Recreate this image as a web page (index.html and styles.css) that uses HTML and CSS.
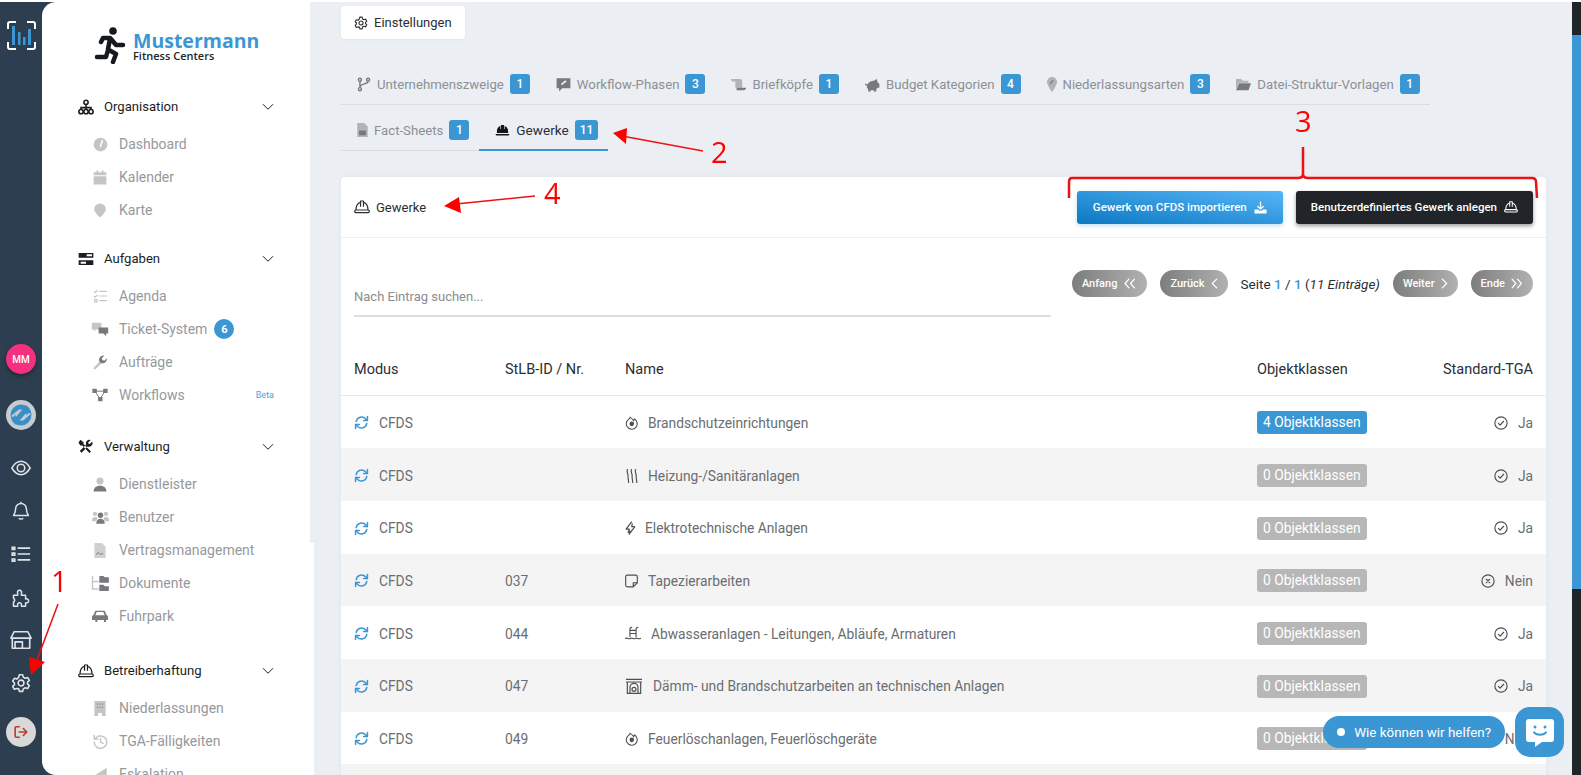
FILE: index.html
```html
<!DOCTYPE html>
<html lang="de">
<head>
<meta charset="utf-8">
<title>Einstellungen – Gewerke</title>
<link rel="stylesheet" href="styles.css">
</head>
<body>
<svg class="sprite" xmlns="http://www.w3.org/2000/svg">
  <symbol id="i-refresh" viewBox="0 0 24 24"><g fill="none" stroke="currentColor" stroke-width="2.4" stroke-linecap="round" stroke-linejoin="round"><path d="M3.5 10.5A8.8 8.8 0 0 1 18.6 6l2.4 2.6"/><path d="M21.5 2.5v6.3h-6.2"/><path d="M20.5 13.5A8.8 8.8 0 0 1 5.4 18L3 15.4"/><path d="M2.5 21.5v-6.3h6.2"/></g></symbol>
  <symbol id="i-check" viewBox="0 0 24 24"><g fill="none" stroke="currentColor" stroke-width="2" stroke-linecap="round" stroke-linejoin="round"><circle cx="12" cy="12" r="10.5"/><path d="M7.5 12.5l3 3 6-6.5"/></g></symbol>
  <symbol id="i-times" viewBox="0 0 24 24"><g fill="none" stroke="currentColor" stroke-width="2" stroke-linecap="round"><circle cx="12" cy="12" r="10.5"/><path d="M9 9l6 6M15 9l-6 6"/></g></symbol>
  <symbol id="i-fire" viewBox="0 0 24 24"><path fill="none" stroke="currentColor" stroke-width="2" d="M9.5 2.5C9 5 5.5 6 3.8 9.5a10 10 0 1 0 18 1.5c-.8-2.5-2.5-4.5-4.3-5.5l-1.5 3C14.5 6.5 12 4 9.5 2.5z"/><circle cx="12.5" cy="14.5" r="4.2" fill="currentColor"/></symbol>
  <symbol id="i-gear" viewBox="0 0 24 24"><g fill="none" stroke="currentColor" stroke-width="1.9" stroke-linejoin="round"><path d="M10 2h4l.7 3 2.3 1.300 3-.9 2 3.500-2.200 2.100v2l2.200 2.100-2 3.500-3-.9-2.300 1.300-.7 3h-4l-.7-3L7 18.700l-3 .9-2-3.500 2.200-2.100v-2L2 9.900l2-3.500 3 .9L9.300 5z"/><circle cx="12" cy="12" r="3.5"/></g></symbol>
  <symbol id="i-helmet-o" viewBox="0 0 24 24"><g fill="none" stroke="currentColor" stroke-width="1.8" stroke-linejoin="round"><path d="M3 16.5C3 10 6 6 9.8 5M21 16.5C21 10 18 6 14.2 5"/><path d="M9.8 11.500V3h4.400v8.500"/><rect x="1" y="16.500" width="22" height="4" rx="2"/></g></symbol>
  <symbol id="i-helmet" viewBox="0 0 24 24"><path fill="currentColor" d="M9.500 3h5v6.500h1V4.800A9 9 0 0 1 21 13v3H3v-3a9 9 0 0 1 5.500-8.200v4.700h1zM1 17.500h22c0 1.800-1 2.500-2.500 2.500h-17C2 20 1 19.300 1 17.500z"/></symbol>
  <symbol id="i-chev" viewBox="0 0 24 24"><path fill="none" stroke="currentColor" stroke-width="2" stroke-linecap="round" stroke-linejoin="round" d="M2.500 7L12 16.500 21.500 7"/></symbol>
</svg>

<div class="app">
  <nav class="rail">
    <svg class="rail-logo" width="29" height="29" viewBox="0 0 29 29">
      <path class="rail-logo-frame" d="M1 8V3a2 2 0 0 1 2-2h6M20 1h6a2 2 0 0 1 2 2v5M28 21v5a2 2 0 0 1-2 2h-6M9 28H3a2 2 0 0 1-2-2v-5"/>
      <path class="rail-logo-bars" d="M5 5h3v19H5zM11 11h2.500v13H11zM16 16h2.500v8H16zM21 8h3v16h-3z"/>
    </svg>
    <div class="rail-bottom">
      <div class="avatar">MM</div>
      <div class="round round-sync">
        <svg width="24" height="24" viewBox="0 0 24 24"><circle cx="12" cy="12" r="8" fill="none" stroke="#3a8fc7" stroke-width="5"/><path d="M5 20L19 4" stroke="#3a8fc7" stroke-width="5"/><path d="M3 13.500L11 7M21 10.500L13 17" stroke="#c7ccd2" stroke-width="2"/></svg>
      </div>
      <div class="rail-icons">
        <span class="rail-icon"><svg width="20" height="20" viewBox="0 0 24 24" fill="none" stroke="currentColor" stroke-width="1.800"><path d="M1 12c3-5 7-8 11-8s8 3 11 8c-3 5-7 8-11 8s-8-3-11-8z"/><circle cx="12" cy="12" r="4.500"/></svg></span>
        <span class="rail-icon"><svg width="20" height="20" viewBox="0 0 24 24" fill="none" stroke="currentColor" stroke-width="1.800" stroke-linejoin="round"><path d="M12 3a6.500 6.500 0 0 0-6.500 6.500c0 5-2.500 7-2.500 8h18c0-1-2.500-3-2.500-8A6.500 6.500 0 0 0 12 3zM12 1v2M9.500 20.500c.8 1.500 4.200 1.500 5 0"/></svg></span>
        <span class="rail-icon"><svg width="20" height="20" viewBox="0 0 24 24" fill="none" stroke="currentColor" stroke-width="2"><path d="M8 5h15M8 12h15M8 19h15"/><path d="M1.500 4h3v2.500h-3zM1.500 11h3v2.500h-3zM1.500 18h3v2.500h-3z"/></svg></span>
        <span class="rail-icon"><svg width="20" height="20" viewBox="0 0 24 24" fill="none" stroke="currentColor" stroke-width="1.800" stroke-linejoin="round"><path d="M3 10h5V7.500a2.500 2.500 0 1 1 4.500 0V10h5v4.500a2.500 2.500 0 1 1 0 4.500V23h-5v-2a2.200 2.200 0 1 0-4.500 0v2H3v-5a2.500 2.500 0 0 0 0-4.500z"/></svg></span>
        <span class="rail-icon"><svg width="22" height="22" viewBox="0 0 24 24" fill="none" stroke="currentColor" stroke-width="1.800" stroke-linejoin="round"><path d="M4.500 3h15L23 10H1zM2.500 10v11h19V10M5.500 21v-7h8v7M2 10h20"/></svg></span>
        <span class="rail-icon"><svg width="20" height="20"><use href="#i-gear"/></svg></span>
      </div>
      <div class="round round-logout">
        <svg width="14" height="14" viewBox="0 0 24 24" fill="none" stroke="currentColor" stroke-width="2.800" stroke-linecap="round" stroke-linejoin="round"><path d="M9 3H4a2 2 0 0 0-2 2v14a2 2 0 0 0 2 2h5M9 12h13M16 6l6 6-6 6"/></svg>
      </div>
    </div>
  </nav>

  <aside class="sidebar">
    <span class="side-thumb"></span>
    <div class="brand">
      <svg class="brand-mark" width="32" height="37" viewBox="0 0 32 37" fill="none" stroke="#16191d" stroke-width="4.500" stroke-linecap="round" stroke-linejoin="round">
        <circle cx="19" cy="4" r="3.800" fill="#16191d" stroke="none"/>
        <path d="M16 12l-2 10M16 11H9l-2 4M17 12l5 6h7M15 23l7 4-3 8M14 23l-2 7H3"/>
      </svg>
      <div class="brand-text">
        <div class="brand-name">Mustermann</div>
        <div class="brand-sub">Fitness Centers</div>
      </div>
    </div>

    <section class="nav-sec nav-first">
      <div class="nav-head">
        <svg class="nav-head-ico" width="16" height="16" viewBox="0 0 24 24" fill="none" stroke="currentColor" stroke-width="2.400"><circle cx="12" cy="5" r="3.200"/><circle cx="4.500" cy="19" r="3.200"/><circle cx="12" cy="19" r="3.200"/><circle cx="19.500" cy="19" r="3.200"/><path d="M12 8v8M4.500 16v-3h15v3"/></svg>
        <span class="nav-label">Organisation</span>
        <svg class="nav-chev" width="12" height="12"><use href="#i-chev"/></svg>
      </div>
      <a class="nav-item"><span class="nav-ico"><svg width="15" height="15" viewBox="0 0 24 24"><circle cx="12" cy="12" r="11" fill="currentColor"/><path d="M15 6l-3 9" stroke="#fff" stroke-width="2.500" stroke-linecap="round"/></svg></span>Dashboard</a>
      <a class="nav-item"><span class="nav-ico"><svg width="14" height="15" viewBox="0 0 24 24" fill="currentColor"><path d="M6 0h3v4H6zM15 0h3v4h-3zM1 3h22v5H1zM1 10h22v14H1z"/></svg></span>Kalender</a>
      <a class="nav-item"><span class="nav-ico"><svg width="14" height="15" viewBox="0 0 24 24" fill="currentColor"><path d="M12 0a10 10 0 0 0-10 10c0 6 10 14 10 14s10-8 10-14A10 10 0 0 0 12 0z"/></svg></span>Karte</a>
    </section>

    <section class="nav-sec">
      <div class="nav-head">
        <svg class="nav-head-ico" width="16" height="14" viewBox="0 0 24 20" fill="currentColor"><path d="M1 1h22v7H1zM1 12h22v7H1z"/><path d="M13 3h8v3h-8zM4 14h8v3H4z" fill="#fff"/></svg>
        <span class="nav-label">Aufgaben</span>
        <svg class="nav-chev" width="12" height="12"><use href="#i-chev"/></svg>
      </div>
      <a class="nav-item"><span class="nav-ico"><svg width="15" height="14" viewBox="0 0 24 24" fill="none" stroke="currentColor" stroke-width="2"><path d="M10 4h13M10 12h13M10 20h13M1 4l2 2 4-4M1 12l2 2 4-4M2 18h4v4H2z"/></svg></span>Agenda</a>
      <a class="nav-item"><span class="nav-ico"><svg width="18" height="15" viewBox="0 0 26 22"><path fill="#c4c5c7" d="M1 1h14v10H7l-3 3v-3H1z"/><path fill="#77797c" d="M11 8h14v9h-3v4l-4-4h-7z"/></svg></span>Ticket-System<span class="count-pill">6</span></a>
      <a class="nav-item"><span class="nav-ico"><svg width="15" height="15" viewBox="0 0 24 24"><path stroke="#c4c5c7" stroke-width="4" stroke-linecap="round" d="M3 21l9-9"/><path fill="#77797c" d="M22 5l-4 4-3-1-1-3 4-4a7 7 0 0 0-8 9l3 3a7 7 0 0 0 9-8z"/></svg></span>Aufträge</a>
      <a class="nav-item nav-item-beta"><span class="nav-ico"><svg width="16" height="14" viewBox="0 0 24 22" fill="#77797c"><path stroke="#77797c" stroke-width="1.500" d="M4 5h16M4 5l8 12M20 5l-8 12"/><rect y="1" width="7" height="7" rx="1"/><rect x="17" y="1" width="7" height="7" rx="1"/><rect x="9" y="14" width="7" height="7" rx="1"/></svg></span>Workflows<span class="beta">Beta</span></a>
    </section>

    <section class="nav-sec nav-gap-m">
      <div class="nav-head">
        <svg class="nav-head-ico" width="15" height="15" viewBox="0 0 24 24" fill="currentColor"><path d="M3 1l5 4v3l12 12-2.500 2.500L6 10.500H3L0 6zM22 4l-4 4-2-.5-.5-2 4-4a6 6 0 0 0-7.500 7.500L2 19l3 3 9.500-10A6 6 0 0 0 22 4z"/></svg>
        <span class="nav-label">Verwaltung</span>
        <svg class="nav-chev" width="12" height="12"><use href="#i-chev"/></svg>
      </div>
      <a class="nav-item"><span class="nav-ico"><svg width="14" height="15" viewBox="0 0 24 24"><circle cx="12" cy="6" r="6" fill="#c4c5c7"/><path fill="#77797c" d="M1 24c0-6 4-10 11-10s11 4 11 10z"/></svg></span>Dienstleister</a>
      <a class="nav-item"><span class="nav-ico"><svg width="17" height="14" viewBox="0 0 28 22"><circle cx="5" cy="6" r="3.500" fill="#c4c5c7"/><circle cx="23" cy="6" r="3.500" fill="#c4c5c7"/><circle cx="14" cy="8" r="4.500" fill="#77797c"/><path fill="#c4c5c7" d="M0 16c0-3 2-5 5-5s4 1 4 2l-2 5H0zM28 16c0-3-2-5-5-5s-4 1-4 2l2 5h7z"/><path fill="#77797c" d="M7 22c0-5 3-8 7-8s7 3 7 8z"/></svg></span>Benutzer</a>
      <a class="nav-item"><span class="nav-ico"><svg width="12" height="15" viewBox="0 0 18 24"><path fill="#cfd0d2" d="M0 0h12l6 6v18H0z"/><path fill="none" stroke="#77797c" stroke-width="1.500" d="M3 19l3-4 3 3 5-1"/></svg></span>Vertragsmanagement</a>
      <a class="nav-item"><span class="nav-ico"><svg width="18" height="15" viewBox="0 0 26 22"><path fill="none" stroke="#c4c5c7" stroke-width="2" d="M2 0v19h9M2 8h9"/><path fill="#77797c" d="M12 0h6l2 2h6v8H12zM12 13h6l2 2h6v7H12z"/></svg></span>Dokumente</a>
      <a class="nav-item"><span class="nav-ico"><svg width="16" height="14" viewBox="0 0 24 20" fill="#77797c"><path d="M5 2h14l3 7a2 2 0 0 1 2 2v5h-3v3h-3v-3H8v3H5v-3H0v-5a2 2 0 0 1 2-2zM7 4L5 9h14l-2-5z"/></svg></span>Fuhrpark</a>
    </section>

    <section class="nav-sec nav-gap-l">
      <div class="nav-head">
        <svg class="nav-head-ico" width="16" height="16"><use href="#i-helmet-o"/></svg>
        <span class="nav-label">Betreiberhaftung</span>
        <svg class="nav-chev" width="12" height="12"><use href="#i-chev"/></svg>
      </div>
      <a class="nav-item"><span class="nav-ico"><svg width="12" height="15" viewBox="0 0 18 24" fill="#c4c5c7"><path d="M0 0h18v24h-6v-5H6v5H0z"/><path fill="#8b8d90" d="M4 4h2v2H4zM8 4h2v2H8zM12 4h2v2h-2zM4 9h2v2H4zM8 9h2v2H8zM12 9h2v2h-2z"/></svg></span>Niederlassungen</a>
      <a class="nav-item"><span class="nav-ico"><svg width="15" height="15" viewBox="0 0 24 24" fill="none" stroke="currentColor" stroke-width="2.400" stroke-linecap="round" stroke-linejoin="round"><path d="M4 7a10 10 0 1 1-2 6M2 2.500V8h5.500M12 7v6l4 2"/></svg></span>TGA-Fälligkeiten</a>
      <a class="nav-item"><span class="nav-ico"><svg width="15" height="15" viewBox="0 0 24 24" fill="currentColor"><path d="M22 1v22L2 14z"/></svg></span>Eskalation</a>
    </section>
  </aside>

  <main class="main">
    <div class="page-title">
      <svg width="14" height="14"><use href="#i-gear"/></svg>
      <span>Einstellungen</span>
    </div>

    <div class="tabs">
      <a class="tab"><svg class="tab-ico" width="14" height="15" viewBox="0 0 24 24" fill="none" stroke="currentColor" stroke-width="2.400"><circle cx="5" cy="4" r="2.600"/><circle cx="5" cy="20" r="2.600"/><circle cx="19" cy="4" r="2.600"/><path d="M5 7v10M19 7c0 5-14 3-14 10"/></svg><span>Unternehmenszweige</span><b class="tab-count">1</b></a>
      <a class="tab"><svg class="tab-ico" width="15" height="15" viewBox="0 0 24 24" fill="currentColor"><path d="M1 2h22v16H10l-5 5v-5H1z"/><path d="M8 13l1-3 6-5 2 2-6 5z" fill="#ebeef3"/></svg><span>Workflow-Phasen</span><b class="tab-count">3</b></a>
      <a class="tab"><svg class="tab-ico" width="15" height="15" viewBox="0 0 24 24"><path fill="#b2b3b5" d="M0 3h14c3 0 4 2 4 4v10H7V7H3C1 7 0 5 0 3z"/><path fill="#77797c" d="M9 17h15c0 3-2 4-4 4H9z"/></svg><span>Briefköpfe</span><b class="tab-count">1</b></a>
      <a class="tab"><svg class="tab-ico" width="15" height="15" viewBox="0 0 24 24" fill="#77797c"><path d="M0 12c0-1 1-2 2-1l2 1c2-4 6-6 10-6l5-3 1 5 3 3v6h-3l-2 3v3h-4v-2H9v2H5v-4c-2-1-2-3-2-5l-2-1c-1 0-1-1-1-1z"/></svg><span>Budget Kategorien</span><b class="tab-count">4</b></a>
      <a class="tab"><svg class="tab-ico" width="10" height="15" viewBox="0 0 16 24"><path fill="#b2b3b5" d="M8 0a8 8 0 0 0-8 8c0 5 8 16 8 16s8-11 8-16a8 8 0 0 0-8-8z"/><path stroke="#77797c" stroke-width="2" d="M5 11l5-6"/></svg><span>Niederlassungsarten</span><b class="tab-count">3</b></a>
      <a class="tab"><svg class="tab-ico" width="15" height="15" viewBox="0 0 24 24"><path fill="#b2b3b5" d="M0 3h8l3 3h9v3H5L0 19z"/><path fill="#77797c" d="M5 10h19l-4 11H0z"/></svg><span>Datei-Struktur-Vorlagen</span><b class="tab-count">1</b></a>
    </div>
    <div class="tabs tabs-second">
      <a class="tab"><svg class="tab-ico" width="11" height="14" viewBox="0 0 18 24"><path fill="#b2b3b5" d="M0 0h12l6 6v18H0z"/><path fill="#77797c" d="M3 13h12v8H3z"/></svg><span>Fact-Sheets</span><b class="tab-count">1</b></a>
      <a class="tab tab-active"><svg class="tab-ico" width="15" height="15"><use href="#i-helmet"/></svg><span>Gewerke</span><b class="tab-count">11</b></a>
    </div>

    <div class="card">
      <header class="card-head">
        <div class="card-title"><svg width="16" height="16"><use href="#i-helmet-o"/></svg><span>Gewerke</span></div>
        <div class="card-actions">
          <a class="btn btn-blue">Gewerk von CFDS importieren
            <svg width="13" height="13" viewBox="0 0 24 24" fill="none" stroke="currentColor" stroke-width="2.400" stroke-linecap="round" stroke-linejoin="round"><path d="M12 2v13M7 10l5 5 5-5"/><path fill="currentColor" d="M2 17h5l2 2h6l2-2h5v5H2z"/></svg></a>
          <a class="btn btn-dark">Benutzerdefiniertes Gewerk anlegen
            <svg width="14" height="14"><use href="#i-helmet-o"/></svg></a>
        </div>
      </header>

      <div class="toolbar">
        <div class="search">Nach Eintrag suchen...</div>
        <div class="pager">
          <a class="pill">Anfang <svg width="14" height="11" viewBox="0 0 24 20" class="pill-chev"><path d="M10 2L3 10l7 8M20 2l-7 8 7 8"/></svg></a>
          <a class="pill">Zurück <svg width="7" height="11" viewBox="0 0 12 20" class="pill-chev"><path d="M10 2l-8 8 8 8"/></svg></a>
          <span class="pager-info">Seite <em class="pg">1</em> / <em class="pg">1</em> (<i>11 Einträge)</i></span>
          <a class="pill">Weiter <svg width="7" height="11" viewBox="0 0 12 20" class="pill-chev"><path d="M2 2l8 8-8 8"/></svg></a>
          <a class="pill">Ende <svg width="12" height="11" viewBox="0 0 22 20" class="pill-chev"><path d="M2 2l7 8-7 8M12 2l7 8-7 8"/></svg></a>
        </div>
      </div>

      <div class="table">
        <div class="tr th">
          <div>Modus</div><div>StLB-ID / Nr.</div><div>Name</div><div>Objektklassen</div><div class="right">Standard-TGA</div>
        </div>

        <div class="tr">
          <div class="mode"><svg width="15" height="15"><use href="#i-refresh"/></svg>CFDS</div><div></div>
          <div class="name"><svg width="13" height="15"><use href="#i-fire"/></svg>Brandschutzeinrichtungen</div>
          <div><span class="obj obj-on">4 Objektklassen</span></div>
          <div class="std"><svg width="14" height="14"><use href="#i-check"/></svg>Ja</div>
        </div>
        <div class="tr">
          <div class="mode"><svg width="15" height="15"><use href="#i-refresh"/></svg>CFDS</div><div></div>
          <div class="name"><svg width="13" height="14" viewBox="0 0 20 24" fill="none" stroke="currentColor" stroke-width="2" stroke-linecap="round"><path d="M3 1c-2 5 2 7 1 12-.3 2 1 5 1 10M10 1c-2 5 2 7 1 12-.3 2 1 5 1 10M17 1c-2 5 2 7 1 12-.3 2 1 5 1 10"/></svg>Heizung-/Sanitäranlagen</div>
          <div><span class="obj">0 Objektklassen</span></div>
          <div class="std"><svg width="14" height="14"><use href="#i-check"/></svg>Ja</div>
        </div>
        <div class="tr">
          <div class="mode"><svg width="15" height="15"><use href="#i-refresh"/></svg>CFDS</div><div></div>
          <div class="name name-tight"><svg width="11" height="15" viewBox="0 0 16 24" fill="none" stroke="currentColor" stroke-width="2" stroke-linejoin="round"><path d="M10 1L1 13h5l-2 6M15 9h-5l1-5M15 9L6 21l1-6"/></svg>Elektrotechnische Anlagen</div>
          <div><span class="obj">0 Objektklassen</span></div>
          <div class="std"><svg width="14" height="14"><use href="#i-check"/></svg>Ja</div>
        </div>
        <div class="tr">
          <div class="mode"><svg width="15" height="15"><use href="#i-refresh"/></svg>CFDS</div><div>037</div>
          <div class="name"><svg width="13" height="14" viewBox="0 0 22 24" fill="none" stroke="currentColor" stroke-width="2" stroke-linejoin="round"><path d="M14 22H4a3 3 0 0 1-3-3V5a3 3 0 0 1 3-3h14a3 3 0 0 1 3 3v10zM14 22v-7h7"/></svg>Tapezierarbeiten</div>
          <div><span class="obj">0 Objektklassen</span></div>
          <div class="std"><svg width="14" height="14"><use href="#i-times"/></svg>Nein</div>
        </div>
        <div class="tr">
          <div class="mode"><svg width="15" height="15"><use href="#i-refresh"/></svg>CFDS</div><div>044</div>
          <div class="name"><svg width="16" height="15" viewBox="0 0 26 24" fill="none" stroke="currentColor" stroke-width="1.800" stroke-linecap="round"><path d="M8 17V5c0-2 1-3 3-3M18 17V5c0-2 1-3 3-3M8 7h10M8 12h10M1 20c3-2 5 2 8 0s5 2 8 0 5 2 8 0"/></svg>Abwasseranlagen - Leitungen, Abläufe, Armaturen</div>
          <div><span class="obj">0 Objektklassen</span></div>
          <div class="std"><svg width="14" height="14"><use href="#i-check"/></svg>Ja</div>
        </div>
        <div class="tr">
          <div class="mode"><svg width="15" height="15"><use href="#i-refresh"/></svg>CFDS</div><div>047</div>
          <div class="name"><svg width="18" height="16" viewBox="0 0 26 24" fill="none" stroke="currentColor" stroke-width="1.800"><path d="M1 2h24M1 6h24M3 6v17h20V6M7 23V14a6 6 0 0 1 12 0v9"/><circle cx="13" cy="17" r="3"/></svg>Dämm- und Brandschutzarbeiten an technischen Anlagen</div>
          <div><span class="obj">0 Objektklassen</span></div>
          <div class="std"><svg width="14" height="14"><use href="#i-check"/></svg>Ja</div>
        </div>
        <div class="tr">
          <div class="mode"><svg width="15" height="15"><use href="#i-refresh"/></svg>CFDS</div><div>049</div>
          <div class="name"><svg width="13" height="15"><use href="#i-fire"/></svg>Feuerlöschanlagen, Feuerlöschgeräte</div>
          <div><span class="obj">0 Objektklassen</span></div>
          <div class="std"><svg width="14" height="14"><use href="#i-times"/></svg>Nein</div>
        </div>
        <div class="tr"></div>
      </div>
    </div>
  </main>

  <div class="page-scroll"><span class="page-scroll-thumb"></span></div>
</div>

<div class="chat">
  <div class="chat-bubble"><span class="chat-dot"></span>Wie können wir helfen?</div>
  <div class="chat-btn">
    <svg width="30" height="29" viewBox="0 0 30 29"><path fill="#fff" d="M4 1h22a3 3 0 0 1 3 3v17a3 3 0 0 1-3 3h-9l-7 5v-5H4a3 3 0 0 1-3-3V4a3 3 0 0 1 3-3z"/><circle cx="10" cy="9" r="1.500" fill="#3a97d4"/><circle cx="20" cy="9" r="1.500" fill="#3a97d4"/><path d="M9 14.500c3 3 9 3 12 0" fill="none" stroke="#3a97d4" stroke-width="2" stroke-linecap="round"/></svg>
  </div>
</div>

<svg class="marks" width="1581" height="775" viewBox="0 0 1581 775">
  <g class="mark-line">
    <path d="M58 604L37 660"/>
    <path d="M703 151L622 136"/>
    <path d="M535 196L456 204"/>
  </g>
  <path class="mark-brace" d="M1303 147V174c0 3-2 4-5 4H1072c-2 0-3 1-3 4v16M1303 174c0 3 2 4 5 4H1532c3 0 4 2 4 4l1 16"/>
  <g class="mark-fill">
    <path d="M31 675L29 657 45 662z"/>
    <path d="M613 133L627 128 626 144z"/>
    <path d="M444 206L459 197 461 213z"/>
  </g>
  <g class="mark-num">
    <text x="51" y="592">1</text>
    <text x="711" y="163">2</text>
    <text x="1295" y="132">3</text>
    <text x="544" y="204">4</text>
  </g>
</svg>
</body>
</html>
```

FILE: styles.css
```css
* { box-sizing: border-box; }

html, body {
  margin: 0;
  height: 100%;
  overflow: hidden;
}

body {
  padding-top: 2px;
  background: #fff;
  font-family: Roboto, "Liberation Sans", sans-serif;
  font-size: 14px;
  color: #2b2e33;
}

.sprite { display: none; }

a { color: inherit; text-decoration: none; }
svg { display: block; flex: none; }

.app {
  display: flex;
  height: 773px;
  background: #2c3e50;
}

/* Icon rail */
.rail {
  width: 42px;
  flex: none;
  display: flex;
  flex-direction: column;
  align-items: center;
  background: #2c3e50;
  color: #dfe3e8;
  padding: 19px 0 28px;
}

.rail-logo-frame { fill: none; stroke: #fff; stroke-width: 2; }
.rail-logo-bars { fill: #3a97d4; }

.rail-bottom {
  margin-top: auto;
  display: flex;
  flex-direction: column;
  align-items: center;
}

.avatar, .round {
  width: 30px;
  height: 30px;
  border-radius: 50%;
  display: flex;
  align-items: center;
  justify-content: center;
}

.avatar {
  background: #f5307f;
  color: #fff;
  font-size: 10px;
  font-weight: 500;
  box-shadow: 0 2px 4px rgba(0, 0, 0, .35);
}

.round-sync {
  margin-top: 26px;
  background: #c7ccd2;
}

.round-logout {
  margin-top: 13px;
  background: #d9d9d9;
  color: #c0392b;
}

.rail-icons {
  display: flex;
  flex-direction: column;
  margin-top: 16px;
}

.rail-icon {
  height: 43px;
  display: flex;
  align-items: center;
  justify-content: center;
}

/* Sidebar */
.sidebar {
  position: relative;
  width: 272px;
  flex: none;
  background: #fff;
  border-radius: 14px 0 0 14px;
  overflow: hidden;
  padding: 25px 0 0 36px;
}

.side-thumb {
  position: absolute;
  top: 0;
  right: 0;
  width: 4px;
  height: 541px;
  background: #ebeef3;
}

.brand {
  display: flex;
  align-items: flex-start;
  gap: 7px;
  margin: 0 0 32.5px 16px;
  height: 37px;
}

.brand-text { font-family: "Open Sans", sans-serif; }

.brand-name {
  margin-top: 5px;
  font-size: 19.5px;
  font-weight: 700;
  line-height: 18px;
  color: #3a97d4;
}

.brand-sub {
  font-size: 11px;
  font-weight: 600;
  line-height: 11px;
  color: #23262a;
}

.nav-sec { margin-top: 22px; }
.nav-first { margin-top: 0; }
.nav-gap-m { margin-top: 25px; }
.nav-gap-l { margin-top: 28px; }

.nav-head {
  display: flex;
  align-items: center;
  height: 20px;
  width: 196px;
  margin-bottom: 11px;
  color: #1a1d21;
}

.nav-head-ico { width: 16px; }

.nav-label {
  margin-left: 10px;
  font-size: 13.1px;
}

.nav-chev { margin-left: auto; }

.nav-item {
  display: flex;
  align-items: center;
  height: 33px;
  padding-left: 13px;
  width: 196px;
  color: #96999c;
  font-size: 14px;
}

.nav-ico {
  width: 18px;
  margin-right: 10px;
  display: flex;
  justify-content: center;
  color: #c4c5c7;
}

.count-pill {
  width: 20px;
  height: 20px;
  margin-left: 7px;
  border-radius: 50%;
  background: #3a97d4;
  color: #fff;
  font-size: 11px;
  font-weight: 700;
  display: flex;
  align-items: center;
  justify-content: center;
}

.beta {
  margin-left: auto;
  font-size: 9px;
  color: #5b9bd8;
}

/* Main */
.main {
  flex: 1;
  min-width: 0;
  height: 773px;
  overflow: hidden;
  background: #ebeef3;
  padding: 4px 26px 0 27px;
  display: flex;
  flex-direction: column;
  align-items: flex-start;
}

.main > * { flex: none; }

.page-title {
  display: flex;
  align-items: center;
  gap: 6px;
  height: 33px;
  padding: 0 13px;
  margin-bottom: 25px;
  background: #fff;
  border-radius: 4px;
  color: #2b2e33;
  font-size: 13px;
  box-shadow: 0 1px 3px rgba(0, 0, 0, .04);
}

.tabs {
  display: flex;
  height: 41px;
  border-bottom: 1px solid #d8dbe0;
}

.tabs-second { margin-top: 5px; }

.tab {
  display: flex;
  align-items: center;
  gap: 6px;
  padding: 0 10px 0 16px;
  color: #8d9094;
  height: 40px;
  font-size: 13.2px;
}

.tab-ico { color: #77797c; }

.tab-count {
  min-width: 20px;
  height: 20px;
  padding: 0 5px;
  border-radius: 3px;
  background: #3a97d4;
  color: #fff;
  font-size: 12px;
  font-weight: 500;
  display: flex;
  align-items: center;
  justify-content: center;
}

.tab-active {
  color: #2b2e33;
  font-size: 13.6px;
  box-shadow: 0 1px 0 #3a97d4, inset 0 -1px 0 #3a97d4;
}

.tab-active .tab-ico { color: #14171a; }

.card {
  width: 100%;
  margin-top: 26px;
  background: #fff;
  border-radius: 4px 4px 0 0;
  box-shadow: 0 0 6px rgba(0, 0, 0, .04);
}

.card-head {
  height: 61px;
  display: flex;
  align-items: center;
  justify-content: space-between;
  padding: 0 13px;
  border-bottom: 1px solid #eceef1;
}

.card-title {
  display: flex;
  align-items: center;
  gap: 6px;
  font-size: 13px;
  color: #2b2e33;
}

.card-actions {
  display: flex;
  gap: 13px;
}

.btn {
  height: 33px;
  display: flex;
  align-items: center;
  gap: 7px;
  justify-content: center;
  padding: 0 16px;
  border-radius: 3px;
  color: #fff;
  font-size: 11.5px;
  font-weight: 500;
}

.btn-blue {
  background: linear-gradient(to top right, #0b78c1, #57b5f8);
  box-shadow: 0 2px 5px rgba(58, 151, 212, .3);
}

.btn-dark {
  padding: 0 15px;
  background: #212529;
  box-shadow: 0 2px 4px rgba(0, 0, 0, .4);
}

.toolbar {
  height: 104px;
  display: flex;
  justify-content: space-between;
  align-items: flex-start;
  padding: 32px 13px 0;
}

.search {
  width: 697px;
  height: 47px;
  padding-top: 18px;
  border-bottom: 2px solid #dcdee1;
  font-size: 13px;
  line-height: 18px;
  color: #8a8c8f;
}

.pager {
  display: flex;
  align-items: center;
  gap: 13px;
}

.pill {
  height: 27px;
  display: flex;
  align-items: center;
  gap: 6px;
  padding: 0 10px;
  border-radius: 14px;
  background: linear-gradient(to right, #7d7d7d, #b1b1b1);
  color: #fff;
  font-size: 11px;
  font-weight: 500;
}

.pill-chev {
  fill: none;
  stroke: #fff;
  stroke-width: 2.2;
  stroke-linecap: round;
  stroke-linejoin: round;
}

.pager-info {
  font-size: 13.5px;
  color: #2b2e33;
  white-space: nowrap;
}

.pg {
  font-style: normal;
  color: #3a97d4;
  font-weight: 500;
}

.tr {
  display: grid;
  grid-template-columns: 151px 120px 632px 1fr 130px;
  align-items: center;
  height: 52.7px;
  padding: 2px 13px 0;
  color: #6a6d71;
  font-size: 13.8px;
}

.tr:nth-child(odd):not(.th) { background: #f4f4f5; }

.th {
  height: 53.5px;
  color: #2b2e33;
  border-bottom: 1px solid #e6e8ea;
  font-size: 14.5px;
}

.right { text-align: right; }

.mode, .name, .std {
  display: flex;
  align-items: center;
}

.mode { gap: 10px; }
.mode svg { color: #3a97d4; }

.name { gap: 10px; }
.name svg { color: #4d4f52; }
.name-tight { gap: 9px; }

.obj {
  display: inline-block;
  height: 23px;
  line-height: 23px;
  padding: 0 6px;
  border-radius: 3px;
  background: #b7b7b7;
  color: #fff;
  font-size: 13.8px;
  white-space: nowrap;
}

.obj-on { background: #3a97d4; }

.std {
  justify-content: flex-end;
  gap: 10px;
}

.std svg { color: #4d4f52; }

/* Page scrollbar */
.page-scroll {
  width: 9px;
  flex: none;
  height: 773px;
  background: #212529;
  padding-top: 33px;
}

.page-scroll-thumb {
  display: block;
  height: 554px;
  background: #3a97d4;
}

/* Floating chat widget */
.chat {
  position: fixed;
  right: 17px;
  bottom: 18px;
  display: flex;
  align-items: center;
  gap: 10px;
}

.chat-bubble {
  height: 32px;
  padding: 0 14px;
  border-radius: 16px;
  background: #3a97d4;
  color: #fff;
  font-size: 13.4px;
  display: flex;
  align-items: center;
  gap: 9px;
}

.chat-dot {
  width: 8px;
  height: 8px;
  border-radius: 50%;
  background: #fff;
}

.chat-btn {
  width: 49px;
  height: 50px;
  border-radius: 15px;
  background: #3a97d4;
  display: flex;
  align-items: center;
  justify-content: center;
}

/* Red annotations drawn on top of the screenshot */
.marks {
  position: fixed;
  left: 0;
  top: 0;
  pointer-events: none;
}

.mark-line { fill: none; stroke: #ee1111; stroke-width: 1.5; }
.mark-brace { fill: none; stroke: #ee1111; stroke-width: 2.5; }
.mark-fill { fill: #f00; }
.mark-num {
  fill: #f00;
  font-family: "Open Sans", sans-serif;
  font-size: 29px;
}
```
